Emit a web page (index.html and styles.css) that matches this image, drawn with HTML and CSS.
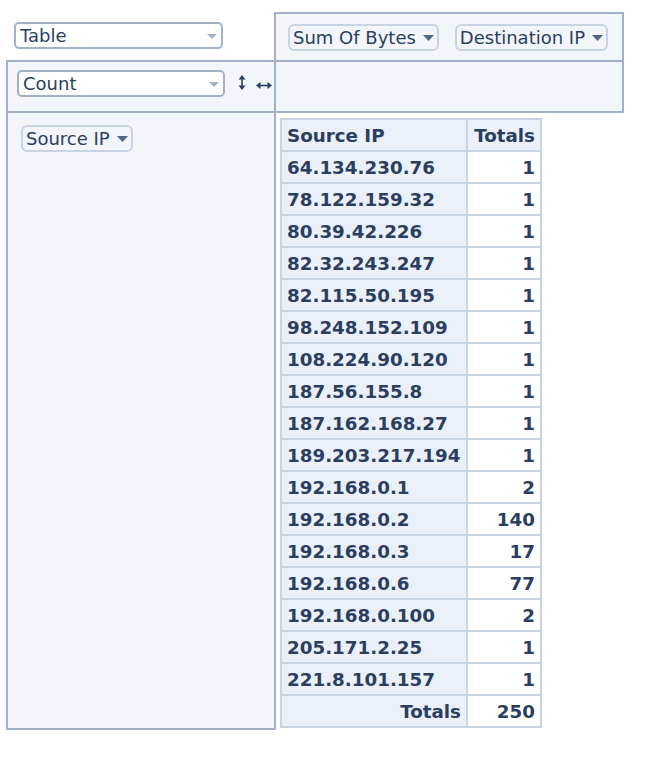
FILE: index.html
```html
<!DOCTYPE html>
<html>
<head>
<meta charset="utf-8">
<title>Pivot Table</title>
<link rel="stylesheet" href="styles.css">
</head>
<body>
<div class="pivot">
  <div class="renderers">
    <div class="dropdown dropdown-renderer">
      <span class="dropdown-text">Table</span>
      <svg class="dropdown-icon" width="10" height="5" viewBox="0 0 10 5"><polygon points="0,0 10,0 5,5"/></svg>
    </div>
  </div>
  <div class="unused bordered">
    <span class="chip"><span class="chip-text">Sum Of Bytes</span><svg class="chip-icon" width="11" height="6" viewBox="0 0 11 6"><polygon points="0,0 11,0 5.5,6"/></svg></span>
    <span class="chip"><span class="chip-text">Destination IP</span><svg class="chip-icon" width="11" height="6" viewBox="0 0 11 6"><polygon points="0,0 11,0 5.5,6"/></svg></span>
  </div>
  <div class="vals bordered">
    <div class="dropdown dropdown-agg">
      <span class="dropdown-text">Count</span>
      <svg class="dropdown-icon" width="10" height="5" viewBox="0 0 10 5"><polygon points="0,0 10,0 5,5"/></svg>
    </div>
    <svg class="order order-row" width="8" height="15" viewBox="0 0 8 15"><path d="M4 3.5 V11.5" stroke="#2a3f5f" stroke-width="1.6"/><polygon points="0.5,4.5 4,0 7.5,4.5"/><polygon points="0.5,10.5 4,15 7.5,10.5"/></svg>
    <svg class="order order-col" width="16" height="7" viewBox="0 0 16 7"><path d="M3.5 3.5 H12.5" stroke="#2a3f5f" stroke-width="1.6"/><polygon points="0,3.5 4.5,0 4.5,7"/><polygon points="16,3.5 11.5,0 11.5,7"/></svg>
  </div>
  <div class="cols bordered"></div>
  <div class="rows bordered">
    <span class="chip"><span class="chip-text">Source IP</span><svg class="chip-icon" width="11" height="6" viewBox="0 0 11 6"><polygon points="0,0 11,0 5.5,6"/></svg></span>
  </div>
  <div class="output">
    <table class="pvt-table">
      <colgroup><col class="col-label"><col class="col-total"></colgroup>
      <thead>
        <tr><th>Source IP</th><th class="total-label">Totals</th></tr>
      </thead>
      <tbody>
        <tr><th>64.134.230.76</th><td>1</td></tr>
        <tr><th>78.122.159.32</th><td>1</td></tr>
        <tr><th>80.39.42.226</th><td>1</td></tr>
        <tr><th>82.32.243.247</th><td>1</td></tr>
        <tr><th>82.115.50.195</th><td>1</td></tr>
        <tr><th>98.248.152.109</th><td>1</td></tr>
        <tr><th>108.224.90.120</th><td>1</td></tr>
        <tr><th>187.56.155.8</th><td>1</td></tr>
        <tr><th>187.162.168.27</th><td>1</td></tr>
        <tr><th>189.203.217.194</th><td>1</td></tr>
        <tr><th>192.168.0.1</th><td>2</td></tr>
        <tr><th>192.168.0.2</th><td>140</td></tr>
        <tr><th>192.168.0.3</th><td>17</td></tr>
        <tr><th>192.168.0.6</th><td>77</td></tr>
        <tr><th>192.168.0.100</th><td>2</td></tr>
        <tr><th>205.171.2.25</th><td>1</td></tr>
        <tr><th>221.8.101.157</th><td>1</td></tr>
        <tr><th class="total-label">Totals</th><td>250</td></tr>
      </tbody>
    </table>
  </div>
</div>
</body>
</html>
```

FILE: styles.css
```css
* { box-sizing: border-box; }

body {
  margin: 0;
  background: #ffffff;
  font-family: "DejaVu Sans", Verdana, sans-serif;
  font-size: 18px;
  color: #2a3f5f;
}

.pivot {
  display: grid;
  grid-template-columns: 270px 348px;
  grid-template-rows: 50px 51px auto;
  width: max-content;
  margin: 12px 0 0 6px;
}

.bordered {
  border: 2px solid #a2b1c6;
  background: #f2f5fa;
}

.renderers {
  padding: 10px 0 0 8px;
}

.unused {
  margin-left: -2px;
  padding: 10px 0 0 12px;
  display: flex;
  align-items: flex-start;
  gap: 16px;
}

.vals {
  margin-top: -2px;
  padding: 8px 0 0 9px;
  display: flex;
  align-items: flex-start;
}

.cols {
  margin: -2px 0 0 -2px;
}

.rows {
  margin-top: -2px;
  padding: 12px 0 0 13px;
}

.output {
  padding: 5px 0 2px 4px;
}

.dropdown {
  display: flex;
  align-items: center;
  justify-content: space-between;
  height: 27px;
  padding: 0 4px;
  border: 2px solid #a2b1c6;
  border-radius: 5px;
  background: #ffffff;
}

.dropdown-renderer { width: 209px; }
.dropdown-agg { width: 208px; }

.dropdown-text {
  line-height: 23px;
  white-space: nowrap;
}

.dropdown-icon {
  fill: #a2b1c6;
  margin-top: 2px;
}

.order { fill: #2a3f5f; }
.order-row { margin: 5px 0 0 13px; }
.order-col { margin: 12px 0 0 10px; }

.chip {
  display: inline-flex;
  align-items: center;
  height: 27px;
  padding: 0 3px;
  border: 2px solid #c8d4e3;
  border-radius: 6px;
  background: #f2f5fa;
  white-space: nowrap;
}

.chip-text { line-height: 23px; }

.chip-icon {
  fill: #506784;
  margin: 1px 0 0 7px;
}

.pvt-table {
  border-collapse: separate;
  border-spacing: 0;
  table-layout: fixed;
  width: 262px;
  border-top: 2px solid #c8d4e3;
  border-left: 2px solid #c8d4e3;
  font-size: 18.3px;
  font-weight: bold;
}

.col-label { width: 186px; }
.col-total { width: 74px; }

.pvt-table th,
.pvt-table td {
  height: 32px;
  padding: 6px 5px 4px;
  line-height: 20px;
  border-right: 2px solid #c8d4e3;
  border-bottom: 2px solid #c8d4e3;
  white-space: nowrap;
  color: #2a3f5f;
}

.pvt-table th {
  background: #ebf0f8;
  text-align: left;
}

.pvt-table td {
  background: #ffffff;
  text-align: right;
}

.pvt-table th.total-label { text-align: right; }
```
